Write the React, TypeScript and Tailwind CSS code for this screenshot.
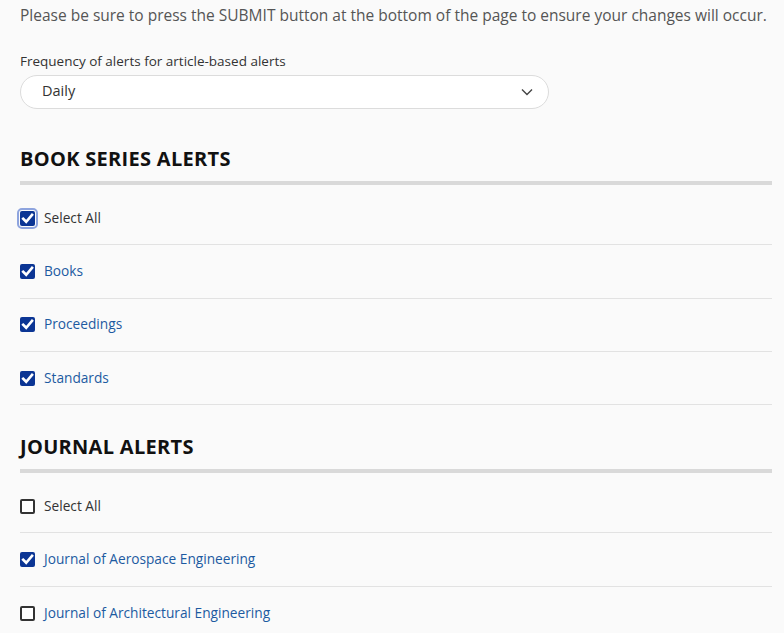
import React from "react"

type Item = { label: string; checked: boolean; link?: boolean; focus?: boolean }

const bookItems: Item[] = [
  { label: "Select All", checked: true, focus: true },
  { label: "Books", checked: true, link: true },
  { label: "Proceedings", checked: true, link: true },
  { label: "Standards", checked: true, link: true },
]

const journalItems: Item[] = [
  { label: "Select All", checked: false },
  { label: "Journal of Aerospace Engineering", checked: true, link: true },
  { label: "Journal of Architectural Engineering", checked: false, link: true },
]

function Box({ checked, focus }: { checked: boolean; focus?: boolean }) {
  if (!checked) {
    return <span className="block w-[15px] h-[15px] border-2 border-[#333] rounded-[2px] bg-white" />
  }
  return (
    <span
      className={
        "flex items-center justify-center w-[15px] h-[15px] rounded-[2px] bg-[#0b3594] " +
        (focus ? "outline-2 outline-[#8ea4de] outline-offset-[1px]" : "")
      }
    >
      <svg width="13" height="13" viewBox="0 0 12 12" fill="none">
        <path d="M2 6.2 L4.8 9 L10.2 2.6" stroke="white" strokeWidth="2.4" strokeLinecap="square" />
      </svg>
    </span>
  )
}

function Section({ title, items, last }: { title: string; items: Item[]; last?: boolean }) {
  return (
    <div>
      <h2 className="text-[20px] font-bold text-[#111] tracking-[0.3px] leading-none pb-[12px] whitespace-nowrap">{title}</h2>
      <div className="h-[4px] bg-[#d9d9d9]" />
      <div className="pt-[7px]">
        {items.map((it, i) => (
          <div
            key={i}
            className={"flex items-center gap-[9px] h-[53.3px] " + (i < items.length - 1 || !last ? "border-b border-[#e2e2e2]" : "")}
          >
            <Box checked={it.checked} focus={it.focus} />
            <span className={"text-[13.7px] whitespace-nowrap " + (it.link ? "text-[#1d5aa1]" : "text-[#333]")}>{it.label}</span>
          </div>
        ))}
      </div>
    </div>
  )
}

export default function App() {
  return (
    <div className="min-h-[633px] bg-[#fafafa] pl-[20px] pr-[12px] pt-[4px]" style={{ fontFamily: '"Open Sans", sans-serif' }}>
      <p className="text-[15.5px] text-[#555] leading-[22px] whitespace-nowrap">
        Please be sure to press the SUBMIT button at the bottom of the page to ensure your changes will occur.
      </p>

      <div className="mt-[26px]">
        <label className="block text-[13.5px] text-[#333] leading-[18px]">Frequency of alerts for article-based alerts</label>
        <div className="mt-[5px] w-[529px] h-[34px] rounded-full border border-[#dcdcdc] bg-white flex items-center justify-between pl-[21px] pr-[14px]">
          <span className="text-[14.5px] text-[#333] leading-[18px] -mt-[2px]">Daily</span>
          <svg width="14" height="14" viewBox="0 0 14 14" fill="none">
            <path d="M2 4.5 L7 9.5 L12 4.5" stroke="#444" strokeWidth="1.4" />
          </svg>
        </div>
      </div>

      <div className="mt-[40px]">
        <Section title="BOOK SERIES ALERTS" items={bookItems} />
      </div>
      <div className="mt-[32px]">
        <Section title="JOURNAL ALERTS" items={journalItems} last />
      </div>
    </div>
  )
}
